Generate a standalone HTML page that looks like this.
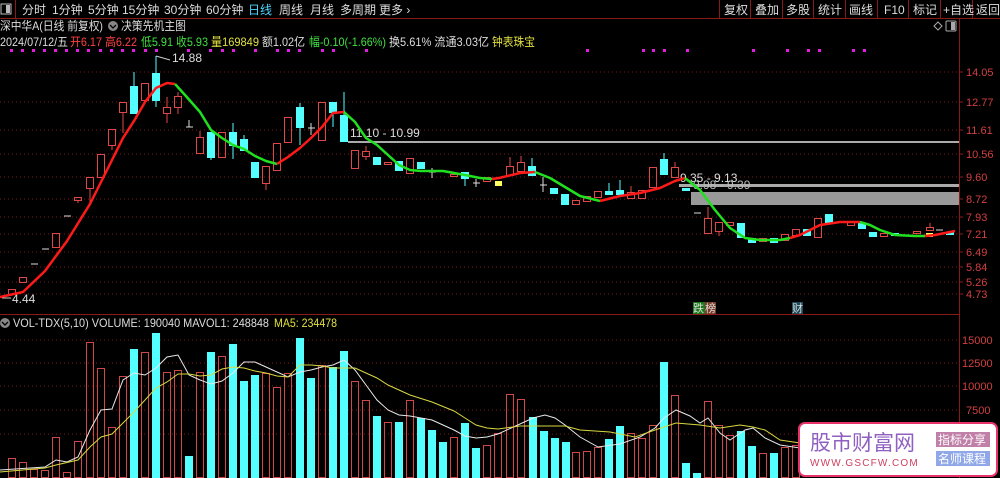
<!DOCTYPE html>
<html><head><meta charset="utf-8">
<style>
*{margin:0;padding:0}
body{width:1000px;height:478px;background:#000;overflow:hidden;font-family:"Liberation Sans","Noto Sans CJK SC",sans-serif;}
svg{display:block}
text{font-family:"Liberation Sans","Noto Sans CJK SC",sans-serif;}
</style></head><body>
<svg width="1000" height="478" viewBox="0 0 1000 478" xmlns="http://www.w3.org/2000/svg">
<rect x="0" y="0" width="1000" height="19" fill="#000"/>
<line x1="0" y1="18.5" x2="1000" y2="18.5" stroke="#8a1a1a"/>
<rect x="1" y="4" width="10" height="10" fill="none" stroke="#bbb"/><rect x="6" y="5" width="4" height="8" fill="#bbb"/>
<line x1="15.5" y1="0" x2="15.5" y2="18" stroke="#8a1a1a"/>
<g font-size="12" fill="#ddd">
<text x="22" y="14">分时</text><text x="52" y="14">1分钟</text><text x="88" y="14">5分钟</text><text x="122" y="14">15分钟</text><text x="164" y="14">30分钟</text><text x="206" y="14">60分钟</text>
<text x="248" y="14" fill="#4fd3ff">日线</text><text x="279" y="14">周线</text><text x="310" y="14">月线</text><text x="340" y="14">多周期</text><text x="379" y="14">更多 ›</text>
</g>
<g stroke="#8a1a1a">
<line x1="719.5" y1="0" x2="719.5" y2="18"/><line x1="750.5" y1="0" x2="750.5" y2="18"/><line x1="782.5" y1="0" x2="782.5" y2="18"/><line x1="813.5" y1="0" x2="813.5" y2="18"/><line x1="845.5" y1="0" x2="845.5" y2="18"/><line x1="877.5" y1="0" x2="877.5" y2="18"/><line x1="908.5" y1="0" x2="908.5" y2="18"/><line x1="940.5" y1="0" x2="940.5" y2="18"/><line x1="972.5" y1="0" x2="972.5" y2="18"/></g>
<g font-size="12" fill="#ddd">
<text x="724" y="14">复权</text><text x="755" y="14">叠加</text><text x="786" y="14">多股</text><text x="818" y="14">统计</text><text x="849" y="14">画线</text><text x="884" y="14">F10</text><text x="913" y="14">标记</text><text x="943" y="14">+自选</text><text x="976" y="14">返回</text>
</g>
<line x1="959.5" y1="19" x2="959.5" y2="478" stroke="#8a1a1a"/>
<path d="M934 26 l4 -4 l4 4 l-4 4z" fill="none" stroke="#aaa"/>
<rect x="946" y="21" width="10" height="10" fill="none" stroke="#aaa" rx="1"/><rect x="951" y="22" width="4" height="8" fill="#aaa"/>
<g font-size="12">
<text x="0" y="30" fill="#ddd" textLength="103" lengthAdjust="spacingAndGlyphs">深中华A(日线 前复权)</text>
<circle cx="113" cy="26" r="5" fill="#888"/><path d="M110 25 l3 3 l3 -3" stroke="#000" fill="none" stroke-width="1.3"/>
<text x="121" y="30" fill="#ddd" textLength="65" lengthAdjust="spacingAndGlyphs">决策先机主图</text>
<text x="0" y="46" fill="#ddd" textLength="68" lengthAdjust="spacingAndGlyphs">2024/07/12/五</text>
<text x="70" y="46" fill="#ff4040" textLength="67" lengthAdjust="spacingAndGlyphs">开6.17 高6.22</text>
<text x="141" y="46" fill="#40e040" textLength="67" lengthAdjust="spacingAndGlyphs">低5.91 收5.93</text>
<text x="211" y="46" fill="#e0e040" textLength="48" lengthAdjust="spacingAndGlyphs">量169849</text>
<text x="262" y="46" fill="#ddd" textLength="43" lengthAdjust="spacingAndGlyphs">额1.02亿</text>
<text x="309" y="46" fill="#40e040" textLength="77" lengthAdjust="spacingAndGlyphs">幅-0.10(-1.66%)</text>
<text x="389" y="46" fill="#ddd" textLength="100" lengthAdjust="spacingAndGlyphs">换5.61% 流通3.03亿</text>
<text x="492" y="46" fill="#e0e040" textLength="43" lengthAdjust="spacingAndGlyphs">钟表珠宝</text>
</g>
<g fill="#e020e0">
<rect x="10" y="49" width="3" height="3"/><rect x="21" y="49" width="3" height="3"/><rect x="32" y="49" width="3" height="3"/><rect x="43" y="49" width="3" height="3"/><rect x="54" y="49" width="3" height="3"/><rect x="65" y="49" width="3" height="3"/><rect x="76" y="49" width="3" height="3"/><rect x="87" y="49" width="3" height="3"/><rect x="99" y="49" width="3" height="3"/><rect x="110" y="49" width="3" height="3"/><rect x="121" y="49" width="3" height="3"/><rect x="132" y="49" width="3" height="3"/><rect x="144" y="49" width="3" height="3"/><rect x="155" y="49" width="3" height="3"/><rect x="187" y="49" width="3" height="3"/><rect x="209" y="49" width="3" height="3"/><rect x="221" y="49" width="3" height="3"/><rect x="232" y="49" width="3" height="3"/><rect x="254" y="49" width="3" height="3"/><rect x="276" y="49" width="3" height="3"/><rect x="287" y="49" width="3" height="3"/><rect x="298" y="49" width="3" height="3"/><rect x="321" y="49" width="3" height="3"/><rect x="332" y="49" width="3" height="3"/><rect x="365" y="49" width="3" height="3"/>
<rect x="586" y="49" width="3" height="3"/><rect x="642" y="49" width="3" height="3"/><rect x="652" y="49" width="3" height="3"/><rect x="663" y="49" width="3" height="3"/><rect x="686" y="49" width="3" height="3"/><rect x="752" y="49" width="3" height="3"/><rect x="786" y="49" width="3" height="3"/><rect x="807" y="49" width="3" height="3"/><rect x="818" y="49" width="3" height="3"/><rect x="852" y="49" width="3" height="3"/><rect x="863" y="49" width="3" height="3"/>
</g>
<g stroke="#7a1a1a" stroke-dasharray="1 3">
<line x1="0" y1="72" x2="959" y2="72"/><line x1="0" y1="102" x2="959" y2="102"/><line x1="0" y1="130" x2="959" y2="130"/><line x1="0" y1="154" x2="959" y2="154"/><line x1="0" y1="177" x2="959" y2="177"/><line x1="0" y1="199" x2="959" y2="199"/><line x1="0" y1="217" x2="959" y2="217"/><line x1="0" y1="234" x2="959" y2="234"/><line x1="0" y1="252" x2="959" y2="252"/><line x1="0" y1="267" x2="959" y2="267"/><line x1="0" y1="282" x2="959" y2="282"/><line x1="0" y1="294" x2="959" y2="294"/>
<line x1="0" y1="340" x2="959" y2="340"/><line x1="0" y1="363" x2="959" y2="363"/><line x1="0" y1="386" x2="959" y2="386"/><line x1="0" y1="410" x2="959" y2="410"/><line x1="0" y1="434" x2="959" y2="434"/>
</g>
<g stroke="#8a1a1a"><line x1="959" y1="72" x2="963" y2="72"/><line x1="959" y1="102" x2="963" y2="102"/><line x1="959" y1="130" x2="963" y2="130"/><line x1="959" y1="154" x2="963" y2="154"/><line x1="959" y1="177" x2="963" y2="177"/><line x1="959" y1="199" x2="963" y2="199"/><line x1="959" y1="217" x2="963" y2="217"/><line x1="959" y1="234" x2="963" y2="234"/><line x1="959" y1="252" x2="963" y2="252"/><line x1="959" y1="267" x2="963" y2="267"/><line x1="959" y1="282" x2="963" y2="282"/><line x1="959" y1="294" x2="963" y2="294"/></g>
<g font-size="11" fill="#d04040">
<text x="966" y="76">14.05</text><text x="966" y="106">12.77</text><text x="966" y="134">11.61</text><text x="966" y="158">10.56</text><text x="966" y="181">9.60</text><text x="966" y="203">8.72</text><text x="966" y="221">7.93</text><text x="966" y="238">7.21</text><text x="966" y="256">6.49</text><text x="966" y="271">5.84</text><text x="966" y="286">5.26</text><text x="966" y="298">4.73</text>
<text x="962" y="344">15000</text><text x="962" y="367">12500</text><text x="962" y="390">10000</text><text x="966" y="414">7500</text>
</g>
<rect x="348" y="141" width="611" height="2" fill="#aaa"/>
<rect x="679" y="184" width="280" height="3" fill="#aaa"/>
<rect x="691" y="192" width="268" height="13" fill="#999"/>
<g font-size="12" fill="#ddd">
<text x="350" y="137">11.10 - 10.99</text>
<text x="680" y="182">9.35 - 9.13</text>
<text x="693" y="189" fill="#bbb">9.98 - 9.39</text>
<text x="172" y="62">14.88</text>
<text x="12" y="303">4.44</text>
</g>
<path d="M156 56 l14 4" stroke="#ccc"/><path d="M2 298 l9 0" stroke="#ccc"/>
<g stroke="#e04848" fill="none" stroke-width="1">
<rect x="8.5" y="289.5" width="7" height="5"/>
<rect x="19.5" y="277.5" width="7" height="5"/>
<rect x="52.5" y="233.5" width="7" height="14"/>
<rect x="74.5" y="197.5" width="7" height="3"/><line x1="78" y1="200" x2="78" y2="203"/>
<rect x="86.5" y="177.5" width="7" height="11"/><line x1="90" y1="188" x2="90" y2="203"/>
<rect x="97.5" y="154.5" width="7" height="23"/>
<rect x="108.5" y="129.5" width="7" height="16"/><line x1="112" y1="145" x2="112" y2="150"/>
<rect x="119.5" y="102.5" width="7" height="10"/><line x1="123" y1="112" x2="123" y2="133"/>
<rect x="141.5" y="83.5" width="7" height="17"/>
<rect x="163.5" y="107.5" width="7" height="6"/><line x1="167" y1="97" x2="167" y2="107"/><line x1="167" y1="113" x2="167" y2="123"/>
<rect x="174.5" y="96.5" width="7" height="11"/><line x1="178" y1="92" x2="178" y2="96"/><line x1="178" y1="107" x2="178" y2="114"/>
<rect x="196.5" y="137.5" width="7" height="16"/><line x1="200" y1="131" x2="200" y2="137"/>
<rect x="218.5" y="132.5" width="7" height="25"/>
<rect x="262.5" y="166.5" width="7" height="17"/><line x1="266" y1="183" x2="266" y2="190"/>
<rect x="273.5" y="143.5" width="7" height="27"/>
<rect x="284.5" y="117.5" width="7" height="25"/>
<rect x="318.5" y="102.5" width="7" height="38"/>
<rect x="351.5" y="150.5" width="7" height="18"/>
<rect x="362.5" y="151.5" width="7" height="5"/><line x1="366" y1="146" x2="366" y2="151"/><line x1="366" y1="156" x2="366" y2="160"/>
<rect x="384.5" y="162.5" width="7" height="2"/>
<rect x="406.5" y="158.5" width="7" height="15"/>
<rect x="450.5" y="174.5" width="7" height="2"/>
<rect x="483.5" y="177.5" width="7" height="4"/>
<rect x="506.5" y="166.5" width="7" height="9"/><line x1="510" y1="157" x2="510" y2="166"/>
<rect x="517.5" y="162.5" width="7" height="9"/><line x1="521" y1="156" x2="521" y2="162"/>
<rect x="572.5" y="200.5" width="7" height="4"/>
<rect x="583.5" y="196.5" width="7" height="5"/>
<rect x="594.5" y="191.5" width="7" height="6"/>
<rect x="627.5" y="192.5" width="7" height="6"/><line x1="631" y1="186" x2="631" y2="192"/>
<rect x="638.5" y="190.5" width="7" height="8"/>
<rect x="649.5" y="167.5" width="7" height="20"/>
<rect x="671.5" y="167.5" width="7" height="10"/><line x1="675" y1="162" x2="675" y2="167"/>
<rect x="704.5" y="218.5" width="7" height="15"/><line x1="708" y1="207" x2="708" y2="218"/>
<rect x="715.5" y="222.5" width="7" height="9"/><line x1="719" y1="231" x2="719" y2="236"/>
<rect x="726.5" y="222.5" width="7" height="3"/>
<rect x="759.5" y="238.5" width="7" height="3"/>
<rect x="781.5" y="234.5" width="7" height="6"/>
<rect x="792.5" y="229.5" width="7" height="6"/>
<rect x="814.5" y="218.5" width="7" height="19"/>
<rect x="847.5" y="221.5" width="7" height="4"/>
<rect x="880.5" y="233.5" width="7" height="3"/>
<rect x="913.5" y="231.5" width="7" height="2"/>
<rect x="926.5" y="227.5" width="7" height="3"/><line x1="930" y1="223" x2="930" y2="227"/>
</g>
<g fill="#54ffff" stroke="#54ffff">
<rect x="130.5" y="86.5" width="7" height="27"/><line x1="134" y1="72" x2="134" y2="86"/>
<rect x="152.5" y="73.5" width="7" height="27"/><line x1="156" y1="56" x2="156" y2="73"/><line x1="156" y1="100" x2="156" y2="107"/>
<rect x="207.5" y="132.5" width="7" height="25"/><line x1="211" y1="157" x2="211" y2="160"/>
<rect x="229.5" y="132.5" width="7" height="13"/><line x1="233" y1="123" x2="233" y2="159"/>
<rect x="240.5" y="139.5" width="7" height="11"/><line x1="244" y1="135" x2="244" y2="139"/>
<rect x="251.5" y="162.5" width="7" height="15"/>
<rect x="296.5" y="107.5" width="7" height="20"/><line x1="300" y1="103" x2="300" y2="145"/>
<rect x="329.5" y="102.5" width="7" height="10"/><line x1="333" y1="112" x2="333" y2="127"/>
<rect x="340.5" y="115.5" width="7" height="26"/><line x1="344" y1="92" x2="344" y2="115"/>
<rect x="373.5" y="157.5" width="7" height="7"/>
<rect x="395.5" y="161.5" width="7" height="9"/>
<rect x="417.5" y="162.5" width="7" height="6"/>
<rect x="461.5" y="172.5" width="7" height="6"/><line x1="465" y1="178" x2="465" y2="186"/>
<rect x="528.5" y="166.5" width="7" height="9"/><line x1="532" y1="158" x2="532" y2="166"/>
<rect x="550.5" y="188.5" width="7" height="5"/>
<rect x="561.5" y="194.5" width="7" height="10"/>
<rect x="605.5" y="191.5" width="7" height="3"/><line x1="609" y1="183" x2="609" y2="191"/>
<rect x="616.5" y="190.5" width="7" height="4"/><line x1="620" y1="180" x2="620" y2="190"/>
<rect x="660.5" y="159.5" width="7" height="15"/><line x1="664" y1="153" x2="664" y2="159"/>
<rect x="682.5" y="188.5" width="7" height="2"/>
<rect x="737.5" y="223.5" width="7" height="14"/>
<rect x="748.5" y="238.5" width="7" height="4"/>
<rect x="770.5" y="238.5" width="7" height="4"/>
<rect x="803.5" y="229.5" width="7" height="6"/>
<rect x="825.5" y="214.5" width="7" height="8"/>
<rect x="858.5" y="223.5" width="7" height="5"/>
<rect x="869.5" y="232.5" width="7" height="4"/>
<rect x="891.5" y="233.5" width="7" height="2"/>
<rect x="946.5" y="232.5" width="7" height="2"/>
</g>
<rect x="495" y="181" width="7" height="5" fill="#ffff60"/>
<rect x="926" y="233" width="7" height="4" fill="#ffff60"/>
<g stroke="#ddd">
<line x1="31" y1="264" x2="38" y2="264"/><line x1="42" y1="249" x2="49" y2="249"/><line x1="64" y1="216" x2="71" y2="216"/>
<line x1="186" y1="127" x2="193" y2="127"/><line x1="189" y1="120" x2="189" y2="127"/>
<line x1="308" y1="128" x2="315" y2="128"/><line x1="311" y1="123" x2="311" y2="135"/>
<line x1="429" y1="172" x2="436" y2="172"/><line x1="432" y1="168" x2="432" y2="178"/>
<line x1="473" y1="183" x2="480" y2="183"/><line x1="476" y1="179" x2="476" y2="187"/>
<line x1="540" y1="185" x2="547" y2="185"/><line x1="543" y1="177" x2="543" y2="192"/>
<line x1="694" y1="213" x2="701" y2="213"/><line x1="837" y1="222" x2="844" y2="222"/>
<line x1="936" y1="230" x2="943" y2="230"/>
</g>
<g fill="none" stroke-width="2.5" stroke-linejoin="round">
<polyline stroke="#ff1a1a" points="0,297 23,292 45,271 67,241 90,204 112,160 123,138 134,121 145,102 156,88 167,83 175,84"/>
<polyline stroke="#20e020" points="175,84 185,95 200,112 211,130 222,138 233,145 244,149 255,156 266,161 277,164"/>
<polyline stroke="#ff1a1a" points="277,164 288,157 300,148 311,138 322,127 333,113 344,112"/>
<polyline stroke="#20e020" points="344,112 355,122 366,138 377,145 388,155 399,165 410,170 421,171 443,171 465,175 480,178 492,179"/>
<polyline stroke="#ff1a1a" points="492,179 499,178 520,173 535,172"/>
<polyline stroke="#20e020" points="535,172 550,178 565,187 580,196 600,201"/>
<polyline stroke="#ff1a1a" points="600,201 620,196 640,193 660,188 675,181 685,178"/>
<polyline stroke="#20e020" points="685,178 700,190 715,210 730,228 745,238 760,240 780,240 790,238"/>
<polyline stroke="#ff1a1a" points="790,238 800,235 820,225 840,222 860,222"/>
<polyline stroke="#20e020" points="860,222 870,225 880,230 895,235 915,236 925,236"/>
<polyline stroke="#ff1a1a" points="925,236 935,235 955,231"/>
</g>
<rect x="693" y="302" width="12" height="12" fill="#1a7a1a"/><text x="693" y="312" font-size="11" fill="#ddd">跌</text>
<rect x="705" y="302" width="11" height="12" fill="#7a3a2a"/><text x="705" y="312" font-size="11" fill="#ddd">榜</text>
<rect x="792" y="302" width="11" height="12" fill="#1a4a5a"/><text x="792" y="312" font-size="11" fill="#ddd">财</text>
<line x1="0" y1="314.5" x2="959" y2="314.5" stroke="#8a1a1a"/>
<circle cx="5" cy="323" r="5" fill="#888"/><path d="M2 322 l3 3 l3 -3" stroke="#000" fill="none" stroke-width="1.3"/>
<g font-size="12"><text x="13" y="327" fill="#ddd" textLength="256" lengthAdjust="spacingAndGlyphs">VOL-TDX(5,10) VOLUME: 190040 MAVOL1: 248848</text><text x="274" y="327" fill="#e0e040" textLength="63" lengthAdjust="spacingAndGlyphs">MA5: 234478</text></g>
<g stroke="#d04848" fill="none">
<rect x="8.5" y="458.5" width="7" height="19"/><rect x="19.5" y="462.5" width="7" height="15"/><rect x="30.5" y="469.5" width="7" height="8"/><rect x="41.5" y="470.5" width="7" height="7"/><rect x="52.5" y="437.5" width="7" height="40"/><rect x="63.5" y="472.5" width="7" height="5"/><rect x="74.5" y="441.5" width="7" height="36"/><rect x="86.5" y="342.5" width="7" height="135"/><rect x="97.5" y="368.5" width="7" height="109"/><rect x="108.5" y="427.5" width="7" height="50"/><rect x="119.5" y="376.5" width="7" height="101"/><rect x="141.5" y="352.5" width="7" height="125"/><rect x="163.5" y="372.5" width="7" height="105"/><rect x="174.5" y="370.5" width="7" height="107"/><rect x="196.5" y="372.5" width="7" height="105"/><rect x="218.5" y="356.5" width="7" height="121"/><rect x="262.5" y="373.5" width="7" height="104"/><rect x="273.5" y="387.5" width="7" height="90"/><rect x="284.5" y="373.5" width="7" height="104"/><rect x="318.5" y="365.5" width="7" height="112"/><rect x="351.5" y="381.5" width="7" height="96"/><rect x="362.5" y="400.5" width="7" height="77"/><rect x="384.5" y="422.5" width="7" height="55"/><rect x="406.5" y="400.5" width="7" height="77"/><rect x="450.5" y="437.5" width="7" height="40"/><rect x="483.5" y="445.5" width="7" height="32"/><rect x="494.5" y="433.5" width="7" height="44"/><rect x="506.5" y="394.5" width="7" height="83"/><rect x="517.5" y="399.5" width="7" height="78"/><rect x="572.5" y="452.5" width="7" height="25"/><rect x="583.5" y="451.5" width="7" height="26"/><rect x="594.5" y="447.5" width="7" height="30"/><rect x="627.5" y="433.5" width="7" height="44"/><rect x="638.5" y="438.5" width="7" height="39"/><rect x="649.5" y="425.5" width="7" height="52"/><rect x="671.5" y="395.5" width="7" height="82"/><rect x="704.5" y="401.5" width="7" height="76"/><rect x="715.5" y="425.5" width="7" height="52"/><rect x="726.5" y="435.5" width="7" height="42"/><rect x="759.5" y="453.5" width="7" height="24"/><rect x="781.5" y="447.5" width="7" height="30"/><rect x="792.5" y="445.5" width="7" height="32"/>
</g>
<g fill="#54ffff">
<rect x="130" y="349" width="8" height="129"/><rect x="152" y="333" width="8" height="145"/><rect x="185" y="456" width="8" height="22"/><rect x="207" y="352" width="8" height="126"/><rect x="229" y="344" width="8" height="134"/><rect x="240" y="381" width="8" height="97"/><rect x="251" y="375" width="8" height="103"/><rect x="296" y="338" width="8" height="140"/><rect x="307" y="378" width="8" height="100"/><rect x="329" y="367" width="8" height="111"/><rect x="340" y="351" width="8" height="127"/><rect x="373" y="416" width="8" height="62"/><rect x="395" y="422" width="8" height="56"/><rect x="417" y="418" width="8" height="60"/><rect x="428" y="430" width="8" height="48"/><rect x="439" y="442" width="8" height="36"/><rect x="461" y="423" width="8" height="55"/><rect x="472" y="448" width="8" height="30"/><rect x="529" y="417" width="8" height="61"/><rect x="540" y="431" width="8" height="47"/><rect x="551" y="438" width="8" height="40"/><rect x="562" y="442" width="8" height="36"/><rect x="605" y="439" width="8" height="39"/><rect x="616" y="426" width="8" height="52"/><rect x="660" y="362" width="8" height="116"/><rect x="682" y="463" width="8" height="15"/><rect x="693" y="473" width="8" height="5"/><rect x="737" y="431" width="8" height="47"/><rect x="748" y="446" width="8" height="32"/><rect x="770" y="453" width="8" height="25"/>
</g>
<polyline fill="none" stroke="#e8e8e8" stroke-width="1" points="0,470 45,467 56,460 67,462 78,457 90,430 101,410 112,409 123,380 134,373 145,375 156,368 167,357 178,355 189,375 200,380 211,384 222,381 233,373 244,362 255,362 266,367 277,372 288,377 300,372 311,370 322,367 333,365 344,360 355,370 366,385 377,400 388,410 399,415 410,416 421,418 432,420 443,425 454,430 465,436 476,438 487,437 498,434 520,424 533,418 545,415 555,418 565,425 580,437 598,447 620,444 640,437 655,428 664,418 676,410 690,416 700,423 708,418 720,433 730,440 745,430 753,428 765,438 780,445 800,448"/>
<polyline fill="none" stroke="#d8d840" stroke-width="1" points="0,472 45,468 56,465 78,460 90,447 101,437 112,434 123,423 134,412 145,400 156,388 167,382 178,374 189,374 200,376 211,375 222,369 233,367 244,368 255,371 266,373 277,376 288,377 300,365 311,365 322,366 333,368 344,368 355,368 366,373 377,378 388,385 410,395 432,402 454,411 465,418 476,425 487,428 498,429 520,426 545,426 565,426 580,430 610,432 635,437 655,430 676,423 700,425 720,428 740,425 753,427 765,430 780,440 800,443"/>
<rect x="799" y="423" width="198" height="53" rx="6" fill="#fff" stroke="#e8336a" stroke-width="2"/>
<text x="810" y="450" font-size="21" fill="#9060c0" font-family="'Noto Serif CJK SC',serif">股市财富网</text>
<text x="810" y="466" font-size="10" fill="#d04060" font-family="'Liberation Serif',serif" letter-spacing="1.2">WWW.GSCFW.COM</text>
<rect x="936" y="432" width="54" height="15" fill="#c080a8"/><text x="938" y="444" font-size="12" fill="#fff">指标分享</text>
<rect x="936" y="451" width="54" height="15" fill="#90a8e8"/><text x="938" y="463" font-size="12" fill="#fff">名师课程</text>
</svg>
</body></html>
